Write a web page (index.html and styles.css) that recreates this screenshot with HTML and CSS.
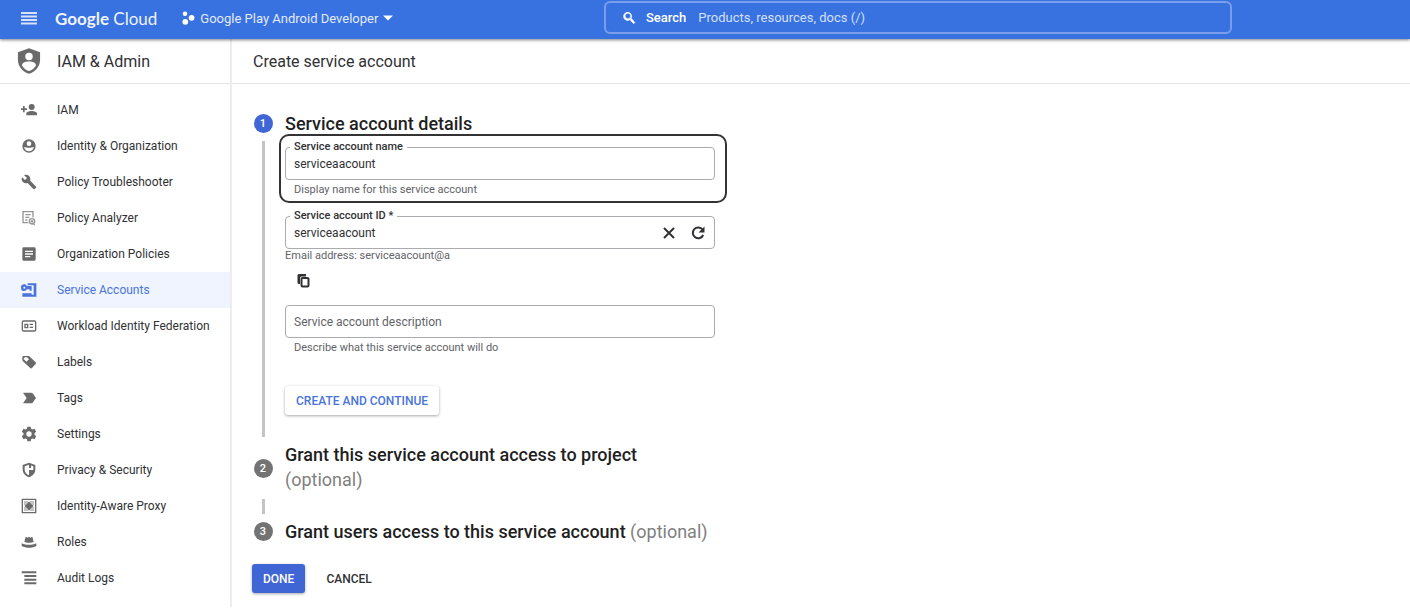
FILE: index.html
```html
<!DOCTYPE html>
<html lang="en">
  <head>
    <meta charset="utf-8">
    <title>Create service account</title>
    <link rel="stylesheet" href="styles.css">
  </head>

  <body>
    <header class="topbar">
      <div class="topbar-left">
        <button type="button" class="icon-button menu" aria-label="Menu">
          <svg width="18" height="14" viewBox="0 0 18 14"><path d="M1 1h16v2H1zM1 4.500h16v2H1zM1 8h16v2H1zM1 11.500h16v2H1z"/></svg>
        </button>
        <a href="#" class="logo"><span>Google</span> Cloud</a>
        <button type="button" class="project">
          <svg width="13" height="14" viewBox="0 0 13 14"><circle cx="3" cy="2.700" r="2.300"/><circle cx="3.300" cy="10.800" r="2.900"/><circle cx="9.600" cy="6.800" r="2.900"/></svg>
          Google Play Android Developer
          <svg width="10" height="6" viewBox="0 0 10 6"><path d="M0 .5h10L5 5.500z"/></svg>
        </button>
      </div>
      <form class="search">
        <svg width="15" height="15" viewBox="0 0 24 24"><path d="M15.500 14h-.79l-.28-.27A6.500 6.500 0 1 0 13 15.300l.7.700v.8l5 5 1.800-1.800zM9.500 14a4.500 4.500 0 1 1 0-9 4.500 4.500 0 0 1 0 9z" stroke="currentColor"/></svg>
        <label for="search">Search</label>
        <input type="text" id="search" placeholder="Products, resources, docs (/)">
      </form>
    </header>

    <div class="layout">
      <aside class="sidebar">
        <div class="title-row">
          <svg width="28" height="28" viewBox="0 0 24 24"><path fill-rule="evenodd" d="M12 1L2.500 4.500V11c0 5.500 4 10.500 9.500 12 5.500-1.500 9.500-6.500 9.500-12V4.500zM12 5a3.200 3.200 0 1 1 0 6.400A3.200 3.200 0 0 1 12 5zM12 12.500c3.500 0 6 1.300 6 3.300-1.200 2.200-3.400 4-6 4.700-2.600-.7-4.800-2.500-6-4.700 0-2 2.500-3.300 6-3.300z"/></svg>
          <h2>IAM &amp; Admin</h2>
        </div>
        <nav>
          <a href="#">
            <svg width="16" height="16" viewBox="0 0 24 24"><path d="M16 3a4.500 4.500 0 1 1 0 9 4.500 4.500 0 0 1 0-9zM8 20v-3c0-2 4-3.500 8-3.500s8 1.500 8 3.500v3zM3 6h2.500v3.500H9V12H5.500v3.500H3V12H-.5V9.500H3z"/></svg>
            IAM
          </a>
          <a href="#">
            <svg width="16" height="16" viewBox="0 0 24 24"><path fill-rule="evenodd" d="M12 2a10 10 0 1 1 0 20 10 10 0 0 1 0-20zM12 5a3.500 3.500 0 0 0-3.500 3.500A3.500 3.500 0 0 0 12 12a3.500 3.500 0 0 0 3.500-3.500A3.500 3.500 0 0 0 12 5zM4.500 13.500C5.500 17.500 8.500 20 12 20s6.500-2.500 7.500-6.500c-4 1.500-11 1.500-15 0z"/></svg>
            Identity &amp; Organization
          </a>
          <a href="#">
            <svg width="16" height="16" viewBox="0 0 24 24"><path d="M22.700 19l-9.100-9.100c.9-2.300.4-5-1.500-6.900-2-2-5-2.400-7.400-1.300L9 6 6 9 1.600 4.700C.4 7.100.9 10.100 2.900 12.100c1.900 1.900 4.600 2.400 6.900 1.500l9.100 9.100c.4.400 1 .4 1.400 0l2.300-2.300c.5-.4.500-1.100.1-1.400z"/></svg>
            Policy Troubleshooter
          </a>
          <a href="#">
            <svg width="16" height="16" viewBox="0 0 24 24" class="outline thin"><path d="M18 11V2.500H3V19h8M6.500 7h8M6.500 11h6M6.500 15h3"/><circle cx="16.500" cy="17" r="4"/><path d="M16.500 15v4M14.500 17h4M18 20l2.500 2.500"/></svg>
            Policy Analyzer
          </a>
          <a href="#">
            <svg width="16" height="16" viewBox="0 0 24 24"><path fill-rule="evenodd" d="M4 2h16a2 2 0 0 1 2 2v16a2 2 0 0 1-2 2H4a2 2 0 0 1-2-2V4a2 2 0 0 1 2-2zM6 7v2h12V7zM6 11v2h12v-2zM6 15v2h8v-2z"/></svg>
            Organization Policies
          </a>
          <a href="#" class="active">
            <svg width="16" height="16" viewBox="0 0 24 24"><path fill-rule="evenodd" d="M10 2h13v20H2v-5h14v2h3V5H10zM5 3.500c1.700 0 3 1 3.600 2.500H16v7h-3v-2H8.500C8 12.500 6.600 13.500 5 13.500a5 5 0 0 1 0-10zM5 7a1.500 1.500 0 1 0 0 3 1.500 1.500 0 0 0 0-3z"/></svg>
            Service Accounts
          </a>
          <a href="#">
            <svg width="16" height="16" viewBox="0 0 24 24" class="outline"><rect x="2" y="4.500" width="20" height="15" rx="2"/><path d="M6 9.500h4v5H6zM13 9.500h5M13 14h5"/></svg>
            Workload Identity Federation
          </a>
          <a href="#">
            <svg width="16" height="16" viewBox="0 0 24 24"><path fill-rule="evenodd" d="M4 3h8l10 9.500a2 2 0 0 1 0 2.500L16.500 21a2 2 0 0 1-2.800 0L11 18.300 6 13.800 2.600 10.500A2 2 0 0 1 2 9V5a2 2 0 0 1 2-2zM6.500 5A2.500 2.500 0 0 0 4 7.500L8 11.500 12 8 9 5z"/></svg>
            Labels
          </a>
          <a href="#">
            <svg width="16" height="16" viewBox="0 0 24 24"><path d="M3 4h12.500c.8 0 1.500.4 2 1l5 7-5 7c-.5.600-1.200 1-2 1H3l5.500-8z"/></svg>
            Tags
          </a>
          <a href="#">
            <svg width="16" height="16" viewBox="0 0 24 24"><path fill-rule="evenodd" d="M9.500 1h5l.6 3.200 2 1.200 3.200-1.100 2.400 4.200-2.500 2.200v2.600l2.500 2.200-2.400 4.200-3.200-1.100-2 1.200-.6 3.200h-5l-.6-3.200-2-1.200-3.200 1.100-2.400-4.200 2.500-2.200v-2.600L1.300 8.500l2.400-4.200 3.200 1.100 2-1.200zM12 8a4 4 0 1 0 0 8 4 4 0 0 0 0-8z"/></svg>
            Settings
          </a>
          <a href="#">
            <svg width="16" height="16" viewBox="0 0 24 24"><path fill-rule="evenodd" d="M12 1l9.500 3.500V11c0 5.500-4 10.500-9.500 12-5.500-1.500-9.500-6.500-9.500-12V4.500zM12 4L5.500 6.500V12c.5 3.700 3 6.800 6.500 8v-8h6.500V6.500L15 5.200V9h-3z"/></svg>
            Privacy &amp; Security
          </a>
          <a href="#">
            <svg width="16" height="16" viewBox="0 0 24 24"><path fill-rule="evenodd" d="M1 1h22v22H1zM3 3v18h18V3z"/><path d="M4.500 4.500h6v3l1.500-2 1.500 2v-3h6v6h-3l2 1.500-2 1.500h3v6h-6v-3l-1.500 2-1.500-2v3h-6v-6h3l-2-1.500 2-1.500h-3z" opacity=".4"/><path d="M12 5l3 4 4 3-4 3-3 4-3-4-4-3 4-3z"/></svg>
            Identity-Aware Proxy
          </a>
          <a href="#">
            <svg width="16" height="16" viewBox="0 0 24 24"><path d="M5 12l2-8 3 1.500L12 4l2 1.500L17 4l2 8c-3 1.500-11 1.500-14 0zM1 14c7 3 15 3 22 0v4c-6 3.500-16 3.500-22 0z"/></svg>
            Roles
          </a>
          <a href="#">
            <svg width="16" height="16" viewBox="0 0 24 24"><path d="M1 2h22v3H1zM5 7.500h18v3H5zM5 13h18v3H5zM5 18.500h18v3H5z"/></svg>
            Audit Logs
          </a>
        </nav>
      </aside>

      <main>
        <div class="title-row">
          <h1>Create service account</h1>
        </div>
        <form class="stepper">
          <section class="step">
            <div class="rail">
              <span class="number current">1</span>
              <span class="line"></span>
            </div>
            <div class="step-content first">
              <h3>Service account details</h3>
              <div class="field focused">
                <div class="box">
                  <label for="name">Service account name</label>
                  <input type="text" id="name" value="serviceaacount">
                </div>
                <p class="hint">Display name for this service account</p>
              </div>
              <div class="field">
                <div class="box">
                  <label for="account-id">Service account ID *</label>
                  <input type="text" id="account-id" value="serviceaacount">
                  <button type="button" class="icon-button" aria-label="Clear">
                    <svg width="12" height="12" viewBox="0 0 12 12"><path d="M1 1l10 10M11 1L1 11" fill="none" stroke="currentColor" stroke-width="2"/></svg>
                  </button>
                  <button type="button" class="icon-button" aria-label="Regenerate">
                    <svg width="14" height="14" viewBox="0 0 14 14"><path d="M11.500 3.500A5.400 5.400 0 1 0 12.200 9" fill="none" stroke="currentColor" stroke-width="2"/><path d="M13.500.500v6h-6z"/></svg>
                  </button>
                </div>
                <p class="email">Email address: serviceaacount@a</p>
                <button type="button" class="icon-button copy" aria-label="Copy email address">
                  <svg width="13" height="14" viewBox="0 0 13 14"><path d="M2 0h7v2.500H4.500A1.500 1.500 0 0 0 3 4v6H2a1.500 1.500 0 0 1-1.500-1.500v-7A1.500 1.500 0 0 1 2 0z"/><rect x="4.500" y="4" width="7" height="8.500" rx="1" fill="none" stroke="currentColor" stroke-width="2"/></svg>
                </button>
              </div>
              <div class="field">
                <div class="box">
                  <input type="text" id="description" placeholder="Service account description" aria-label="Service account description">
                </div>
                <p class="hint">Describe what this service account will do</p>
              </div>
              <button type="button" class="button raised">CREATE AND CONTINUE</button>
            </div>
          </section>

          <section class="step">
            <div class="rail">
              <span class="number tall">2</span>
              <span class="line"></span>
            </div>
            <div class="step-content second">
              <h3>Grant this service account access to project <span class="optional">(optional)</span></h3>
            </div>
          </section>

          <section class="step">
            <div class="rail">
              <span class="number">3</span>
            </div>
            <div class="step-content">
              <h3>Grant users access to this service account <span class="optional">(optional)</span></h3>
            </div>
          </section>

          <div class="actions">
            <button type="submit" class="button primary">DONE</button>
            <button type="button" class="button">CANCEL</button>
          </div>
        </form>
      </main>
    </div>
  </body>
</html>
```
FILE: styles.css
```css
* {
  box-sizing: border-box;
}
body {
  margin: 0;
  background: #fff;
  color: #303134;
  font-family: Roboto, "Liberation Sans", sans-serif;
  font-size: 12px;
}
h1, h2, h3, p {
  margin: 0;
}
a {
  color: inherit;
  text-decoration: none;
}
svg {
  flex-shrink: 0;
  fill: currentColor;
}
button, input {
  border: 0;
  padding: 0;
  background: none;
  color: inherit;
  font: inherit;
}
button {
  cursor: pointer;
}
input {
  flex: 1;
  min-width: 0;
  outline: 0;
}
.outline {
  fill: none;
  stroke: currentColor;
  stroke-width: 2;
}
.thin {
  opacity: 0.7;
}
.icon-button {
  display: flex;
}

/* top bar */
.topbar {
  position: relative;
  display: grid;
  grid-template-columns: 604fr 628fr 178fr;
  align-items: start;
  height: 39px;
  background: #3871e0;
  color: #fff;
  font-size: 13px;
  box-shadow: 0 1px 3px rgba(0, 0, 0, 0.5);
}
.topbar-left {
  display: flex;
  align-items: center;
  height: 36px;
  padding-left: 20px;
  white-space: nowrap;
}
.menu {
  opacity: 0.8;
}
.logo {
  margin-left: 17px;
  color: #eef3fd;
  font-family: Lato, sans-serif;
  font-size: 17px;
}
.logo span {
  font-weight: 700;
}
.project {
  display: flex;
  align-items: center;
  gap: 5px;
  margin-left: 25px;
  color: #e3ebfb;
}
.project svg {
  color: #fff;
}
.search {
  display: flex;
  align-items: center;
  height: 33px;
  margin-top: 1px;
  padding: 0 16px;
  border: 2px solid #799fea;
  border-radius: 6px;
}
.search label {
  margin: 0 12px 0 9px;
  font-weight: 500;
}
.search input::placeholder {
  color: #d3e0f9;
}

.layout {
  display: flex;
  align-items: flex-start;
}
.title-row {
  display: flex;
  align-items: center;
  height: 45px;
  border-bottom: 1px solid #e4e4e4;
}
.title-row h1,
.title-row h2 {
  font-size: 16px;
  font-weight: 400;
}

/* side navigation */
.sidebar {
  flex: 0 0 232px;
  padding-bottom: 11px;
  border-right: 2px solid #ededed;
}
.sidebar .title-row {
  gap: 14px;
  padding-left: 15px;
}
.sidebar svg {
  color: #6a6a6a;
}
.sidebar nav {
  padding-top: 8px;
}
.sidebar nav a {
  display: flex;
  align-items: center;
  gap: 20px;
  height: 36px;
  padding-left: 21px;
}
.sidebar .active,
.sidebar .active svg {
  color: #4a73dc;
}
.sidebar .active {
  background: #eff4fe;
}

/* page */
main {
  flex: 1;
}
main .title-row {
  padding-left: 21px;
}
.stepper {
  padding: 27px 20px 19px;
}
.step {
  display: grid;
  grid-template-columns: 22px minmax(0, 430px);
  gap: 11px;
}
.rail {
  display: flex;
  flex-direction: column;
  align-items: center;
  padding-bottom: 5px;
}
.number {
  width: 19px;
  margin: 3px 0 8px;
  border-radius: 50%;
  background: #737373;
  color: #fff;
  font-size: 11px;
  font-weight: 500;
  line-height: 19px;
  text-align: center;
}
.number.current {
  background: #3f66d4;
}
.number.tall {
  margin: 17px 0 21px;
}
.line {
  flex: 1;
  width: 3px;
  background: #c4c4c4;
}
.step h3 {
  color: #1f1f1f;
  font-size: 18px;
  font-weight: 500;
  line-height: 25px;
}
.optional {
  color: #808080;
  font-weight: 400;
}
.step-content {
  padding-bottom: 20px;
}
.step-content.first,
.step-content.second {
  padding-bottom: 27px;
}

.field {
  margin-bottom: 17px;
}
.field.focused {
  margin: -2px -12px 13px -6px;
  padding: 11px 10px 4px 4px;
  border: 2px solid #333;
  border-radius: 10px;
}
.box {
  position: relative;
  display: flex;
  align-items: center;
  gap: 16px;
  height: 33px;
  padding: 0 9px 0 8px;
  border: 1px solid #a9abae;
  border-radius: 4px;
}
/* label sits over the top border */
.box label {
  position: absolute;
  top: -8px;
  left: 4px;
  padding: 0 4px;
  background: #fff;
  font-size: 11px;
  font-weight: 500;
  line-height: 14px;
}
.box input::placeholder {
  color: #5f6368;
}
.hint,
.email {
  color: #5f6368;
  font-size: 11px;
  line-height: 14px;
}
.hint {
  margin-top: 3px;
  padding-left: 9px;
}
.copy {
  margin: 11px 0 0 12px;
}

.button {
  height: 29px;
  padding: 0 11px;
  border-radius: 3px;
  font-weight: 500;
}
.button.raised {
  margin-top: 14px;
  color: #4a73dc;
  box-shadow: 0 1px 3px rgba(0, 0, 0, 0.35);
}
.button.primary {
  background: #3f66d4;
  color: #fff;
  box-shadow: 0 1px 3px rgba(0, 0, 0, 0.35);
}
.actions {
  display: flex;
  gap: 10px;
}
```
